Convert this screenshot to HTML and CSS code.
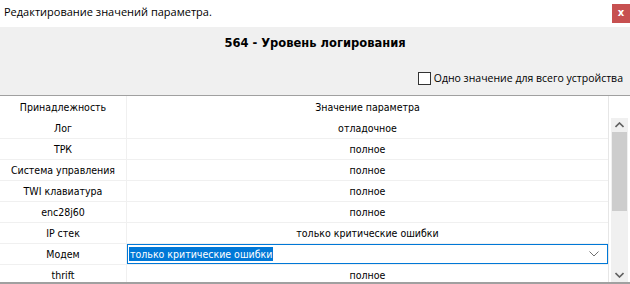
FILE: index.html
```html
<!DOCTYPE html>
<html lang="ru">
<head>
    <meta charset="UTF-8">
    <title>Редактирование значений параметра.</title>
    <link rel="stylesheet" href="styles.css">
</head>
<body>
    <div class="window">
        <div class="titlebar">
            <span class="title">Редактирование значений параметра.</span>
            <span class="close">x</span>
        </div>

        <div class="top">
            <h1>564 - Уровень логирования</h1>
            <label class="whole"><span class="box"></span><span>Одно значение для всего устройства</span></label>
        </div>

        <div class="grid-wrap">
            <div class="grid">
                <div class="row head">
                    <div class="cell name">Принадлежность</div>
                    <div class="cell value">Значение параметра</div>
                </div>
                <div class="row">
                    <div class="cell name">Лог</div>
                    <div class="cell value">отладочное</div>
                </div>
                <div class="row">
                    <div class="cell name">ТРК</div>
                    <div class="cell value">полное</div>
                </div>
                <div class="row">
                    <div class="cell name">Система управления</div>
                    <div class="cell value">полное</div>
                </div>
                <div class="row">
                    <div class="cell name">TWI клавиатура</div>
                    <div class="cell value">полное</div>
                </div>
                <div class="row">
                    <div class="cell name">enc28j60</div>
                    <div class="cell value">полное</div>
                </div>
                <div class="row">
                    <div class="cell name">IP стек</div>
                    <div class="cell value">только критические ошибки</div>
                </div>
                <div class="row">
                    <div class="cell name">Модем</div>
                    <div class="cell value editing">
                        <div class="combo">
                            <span class="selected">только критические ошибки</span>
                            <svg class="chevron" width="10" height="6" viewBox="0 0 10 6">
                                <path d="M0.5 0.5 L5 5 L9.5 0.5" fill="none" stroke="#707070" stroke-width="1"/>
                            </svg>
                        </div>
                    </div>
                </div>
                <div class="row">
                    <div class="cell name">thrift</div>
                    <div class="cell value">полное</div>
                </div>
            </div>

            <div class="scrollbar">
                <div class="arrow">
                    <svg width="9" height="6" viewBox="0 0 9 6">
                        <path d="M0.5 5 L4.5 1 L8.5 5" fill="none" stroke="#606060" stroke-width="1.6"/>
                    </svg>
                </div>
                <div class="track">
                    <div class="thumb"></div>
                </div>
                <div class="arrow">
                    <svg width="9" height="6" viewBox="0 0 9 6">
                        <path d="M0.5 1 L4.5 5 L8.5 1" fill="none" stroke="#606060" stroke-width="1.6"/>
                    </svg>
                </div>
            </div>
        </div>
    </div>
</body>
</html>
```

FILE: styles.css
```css
body {
    margin: 0;
    font-family: "DejaVu Sans Condensed", "DejaVu Sans", sans-serif;
    font-size: 10.5px;
    color: #000;
    background-color: #fff;
}

.window {
    width: 630px;
    height: 284px;
    overflow: hidden;
    display: flex;
    flex-direction: column;
}

.titlebar {
    height: 27px;
    flex-shrink: 0;
    display: flex;
    align-items: flex-start;
    justify-content: space-between;
    background-color: #fff;
}

.title {
    font-family: "Open Sans", sans-serif;
    font-size: 11px;
    padding: 4px 0 0 4px;
}

.close {
    width: 18px;
    height: 19px;
    margin-top: 4px;
    background-color: #c75050;
    color: #fff;
    font-family: "DejaVu Sans", sans-serif;
    font-weight: bold;
    font-size: 10px;
    line-height: 18px;
    text-align: center;
}

.top {
    height: 68px;
    flex-shrink: 0;
    background-color: #f0f0f0;
    display: flex;
    flex-direction: column;
    align-items: center;
}

.top h1 {
    margin: 8px 0 0;
    font-size: 12.8px;
    font-weight: bold;
}

.whole {
    align-self: flex-end;
    display: flex;
    align-items: center;
    margin-top: 21px;
    padding-right: 7px;
    gap: 3px;
    font-family: "Open Sans", sans-serif;
    font-size: 10.5px;
}

.box {
    width: 11px;
    height: 11px;
    border: 1px solid #333;
    background-color: #fff;
}

.grid-wrap {
    flex: 1;
    min-height: 0;
    display: flex;
    border-top: 1px solid #a0a0a0;
    border-bottom: 2px solid #a0a0a0;
    background-color: #fff;
}

.grid {
    width: 608px;
    border-right: 1px solid #e6e6e6;
    overflow: hidden;
}

.row {
    display: flex;
    height: 20px;
    border-bottom: 1px solid #f0f0f0;
}

.row.head {
    height: 22px;
    border-bottom: none;
}

.cell {
    display: flex;
    align-items: center;
    justify-content: center;
    white-space: nowrap;
}

.cell.name {
    width: 126px;
    border-right: 1px solid #f0f0f0;
}

.cell.value {
    flex: 1;
}

.cell.editing {
    align-items: stretch;
}

.combo {
    flex: 1;
    display: flex;
    align-items: center;
    justify-content: space-between;
    border: 1px solid #0078d7;
    padding: 0 8px 0 1px;
}

.selected {
    background-color: #0078d7;
    color: #fff;
    padding: 1px 1px;
}

.scrollbar {
    width: 17px;
    margin: 22px 0 0 2px;
    background-color: #f0f0f0;
    display: flex;
    flex-direction: column;
}

.arrow {
    height: 14px;
    display: flex;
    align-items: center;
    justify-content: center;
}

.track {
    flex: 1;
}

.thumb {
    height: 79px;
    margin: 0 1px;
    background-color: #cdcdcd;
}
```
